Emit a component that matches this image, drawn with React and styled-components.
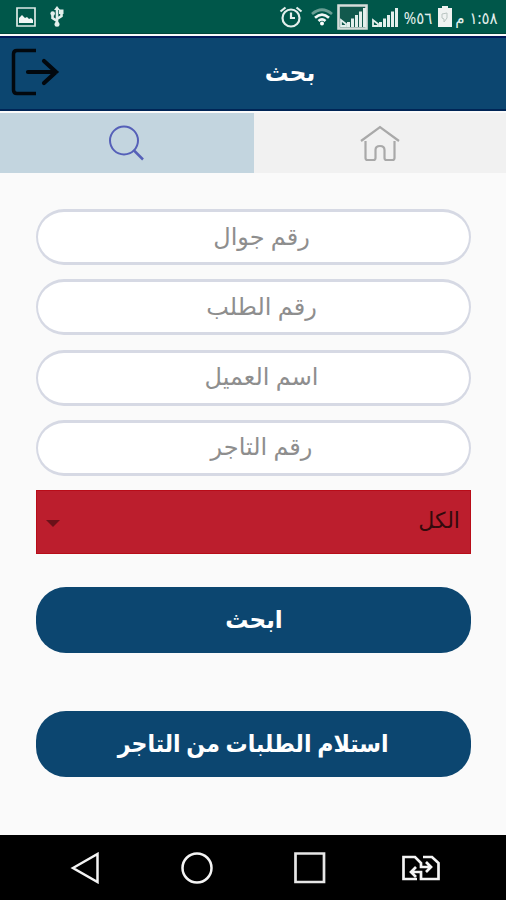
import React, { useState } from 'react';
import styled, { createGlobalStyle } from 'styled-components';

const GlobalStyle = createGlobalStyle`
  * {
    box-sizing: border-box;
  }
  body {
    margin: 0;
    font-family: "Noto Sans", "DejaVu Sans", sans-serif;
  }
`;

const Screen = styled.div`
  display: flex;
  flex-direction: column;
  width: 506px;
  height: 900px;
  overflow: hidden;
  background: #fafafa;
`;

const StatusBar = styled.div`
  display: flex;
  align-items: center;
  flex: none;
  height: 34px;
  padding: 0 8px 0 16px;
  color: #e3efec;
  background: #00574a;
  border-bottom: 1px solid #00453a;
`;

const StatusIcon = styled.svg`
  display: block;
  flex: none;
  margin-left: ${props => props.$gap || 0}px;
`;

const Spacer = styled.div`
  flex: 1;
`;

const StatusText = styled.span`
  width: ${props => props.$width}px;
  margin-left: ${props => props.$gap}px;
  font-size: 15px;
  line-height: 30px;
  text-align: center;
  white-space: nowrap;
  transform: scaleY(1.12);
`;

const Header = styled.header`
  display: flex;
  align-items: center;
  flex: none;
  height: 75px;
  margin-top: 2px;
  background: #0c4670;
  border-top: 2px solid #00195a;
  border-bottom: 2px solid #002556;
`;

const HeaderSide = styled.div`
  width: 240px;
  padding: 2px 0 0 10px;
`;

const Title = styled.h1`
  width: 100px;
  margin: 0;
  padding-bottom: 4px;
  color: #fff;
  font-size: 23.5px;
  font-weight: bold;
  line-height: 40px;
  text-align: center;
`;

const Tabs = styled.nav`
  display: flex;
  flex: none;
  height: 60px;
  margin-top: 2px;
`;

const Tab = styled.button`
  display: flex;
  flex: ${props => props.$active ? '0 0 254px' : '1'};
  align-items: center;
  justify-content: center;
  padding: 0;
  border: 0;
  color: ${props => props.$active ? '#5560b8' : '#a9a9a9'};
  background: ${props => props.$active ? '#c3d5df' : '#f1f1f1'};
`;

const Form = styled.form`
  display: flex;
  flex: 1;
  flex-direction: column;
  padding: 36px 35px 0 36px;
`;

const Input = styled.input`
  height: 56px;
  margin: 0 0 14.3px;
  padding: 0 0 4px 16px;
  border: solid #d6d9e4;
  border-width: 3px 2px;
  border-radius: 28px;
  color: #333;
  background: #fff;
  font-family: inherit;
  font-size: 24px;
  text-align: center;
  &::placeholder {
    color: #8e8e8e;
    opacity: 1;
  }
`;

const Select = styled.div`
  display: flex;
  align-items: center;
  justify-content: space-between;
  height: 64px;
  padding: 0 10px 6px;
  border: 1px solid #b80c18;
  color: #330a0c;
  background: #bc1e2d;
  font-size: 22px;
`;

const Arrow = styled.div`
  margin-top: 8px;
  margin-left: -1px;
  border: 7px solid transparent;
  border-top-color: #6b1119;
  border-bottom: 0;
`;

const Button = styled.button`
  height: 66px;
  margin: ${props => props.$top}px 0 0;
  padding: 0 0 4px;
  border: 0;
  border-radius: 30px;
  color: #fff;
  background: #0c4670;
  font-family: inherit;
  font-size: 24px;
  font-weight: bold;
`;

const ButtonLabel = styled.span`
  display: inline-block;
  transform: scaleX(${props => props.$stretch});
`;

const NavBar = styled.div`
  display: flex;
  align-items: center;
  flex: none;
  height: 65px;
  padding-left: 70px;
  gap: 80px;
  background: #000;
`;

const SimIcon = styled.svg`
  margin-left: -5px;
`;

function Signal({ boxed, gap }) {
  return (
    <StatusIcon $gap={gap} width={boxed ? 31 : 28} height="26" viewBox={boxed ? '0 0 31 26' : '2 0 28 26'} fill="#e3efec">
      {boxed && <path d="M1.500 1.500h28v23h-28z" fill="#12594d" stroke="#d5ddda" strokeWidth="2.600" />}
      <path d="M10 18h3v5h-3zM14 14.500h3V23h-3zM18 11h3v12h-3zM22 7.500h3V23h-3zM26 4h3v19h-3z" />
      <path d="M4 16v6h5v-2z" fill="none" stroke="#e3efec" strokeWidth="1.800" />
    </StatusIcon>
  );
}

const fields = ['رقم جوال', 'رقم الطلب', 'اسم العميل', 'رقم التاجر'];

function App() {
  const [tab, setTab] = useState('search');

  return (
    <Screen>
      <GlobalStyle />
      <StatusBar>
        <StatusIcon width="20" height="20" viewBox="0 0 20 20">
          <path d="M1 1h18v18H1z" fill="none" stroke="#dce9e6" strokeWidth="1.700" />
          <path d="M3 16V11l3-3 3 3 2-1 2 2 2-1 2 2v3z" fill="#f2f7f6" />
        </StatusIcon>
        <StatusIcon $gap={14} width="14" height="21" viewBox="0 0 14 21" fill="none" stroke="#e3efec" strokeWidth="2.600">
          <path d="M7 19V3M7 15l-4.500-3V8M7 13l4.500-3V6" />
          <path d="M7 0l3 4H4z" fill="#e3efec" stroke="none" />
          <circle cx="7" cy="18.300" r="2.500" fill="#e3efec" stroke="none" />
          <circle cx="2.700" cy="7.500" r="2.300" fill="#e3efec" stroke="none" />
          <path d="M9 3.500h4.500V8H9z" fill="#e3efec" stroke="none" />
        </StatusIcon>
        <Spacer />
        <StatusIcon width="24" height="22" viewBox="0 0 24 22" fill="none" stroke="#e3efec" strokeWidth="2.200">
          <circle cx="12" cy="12" r="8.500" />
          <path d="M12 6.500V12h4M1.500 5.500l5-4M22.500 5.500l-5-4" />
        </StatusIcon>
        <StatusIcon $gap={8} width="22" height="18" viewBox="0 0 22 18" fill="none" strokeWidth="2.700">
          <path d="M1 6Q11-2.500 21 6" stroke="#6a9e94" />
          <path d="M4 9.800Q11 3.500 18 9.800M7.500 13Q11 9.800 14.500 13" stroke="#f2f7f6" />
          <circle cx="11" cy="15.500" r="2" fill="#fff" />
        </StatusIcon>
        <Signal boxed gap={4} />
        <Signal gap={3} />
        <StatusText $width={30} $gap={4}>%٥٦</StatusText>
        <StatusIcon $gap={5} width="14" height="21" viewBox="0 0 14 21">
          <path d="M4 0h6v2h4v19H0V2h4z" fill="#f0f3f2" />
          <path d="M4 8l5-1v5l-3 4v-3l-2-1z" fill="none" stroke="#b9c4c1" />
        </StatusIcon>
        <StatusText $width={10} $gap={3}>م</StatusText>
        <StatusText $width={29} $gap={4}>١:٥٨</StatusText>
      </StatusBar>

      <Header>
        <HeaderSide>
          <svg width="50" height="48" viewBox="0 0 50 48" fill="none" stroke="#02080e" strokeWidth="3.500">
            <path d="M26 2.500H7Q3.500 2.500 3.500 6v36q0 3.500 3.500 3.500h19" />
            <path d="M18 24h28M34 13l12 11-12 11" strokeWidth="4.200" strokeLinecap="round" />
          </svg>
        </HeaderSide>
        <Title>بحث</Title>
      </Header>

      <Tabs>
        <Tab $active={tab === 'search'} onClick={() => setTab('search')}>
          <svg width="36" height="36" viewBox="0 0 36 36" fill="none" stroke="currentColor" strokeWidth="2">
            <circle cx="15" cy="15.500" r="14" />
            <path d="M24.500 25l9.500 9.500" strokeWidth="2.500" />
          </svg>
        </Tab>
        <Tab $active={tab === 'home'} onClick={() => setTab('home')}>
          <svg width="40" height="38" viewBox="0 0 40 38" fill="none" stroke="currentColor" strokeWidth="2.200">
            <path d="M1 17L20 3l19 14" />
            <path d="M5.500 17v17q0 2 2 2h6q2 0 2-2V26q0-4 4.500-4t4.500 4v8q0 2 2 2h6q2 0 2-2V17" />
          </svg>
        </Tab>
      </Tabs>

      <Form onSubmit={e => e.preventDefault()}>
        {fields.map(name => (
          <Input key={name} dir="rtl" placeholder={name} />
        ))}
        <Select>
          <Arrow />
          <span>الكل</span>
        </Select>
        <Button $top={33}>
          <ButtonLabel $stretch={0.96}>ابحث</ButtonLabel>
        </Button>
        <Button $top={58} dir="rtl">
          <ButtonLabel $stretch={0.92}>استلام الطلبات من التاجر</ButtonLabel>
        </Button>
      </Form>

      <NavBar>
        <svg width="30" height="32" viewBox="0 0 30 32" fill="none" stroke="#f4f4f4" strokeWidth="2.500">
          <path d="M3 16L27.500 2v28z" />
        </svg>
        <svg width="34" height="34" viewBox="0 0 34 34" fill="none" stroke="#f4f4f4" strokeWidth="2.500">
          <circle cx="17" cy="17" r="14.500" />
        </svg>
        <svg width="32" height="32" viewBox="0 0 32 32" fill="none" stroke="#e6e6e6" strokeWidth="2.700">
          <path d="M1.500 1.500h28.500v28.500H1.500z" />
        </svg>
        <SimIcon width="40" height="28" viewBox="0 0 40 28" fill="none" stroke="#f4f4f4" strokeWidth="2.700">
          <path d="M16 25H2.500V3H14l6 6v4h9M25 8l5 5-5 5" />
          <path d="M22 3h9l6.500 6v16H20v-7h-9M15 13l-5 5 5 5" />
        </SimIcon>
      </NavBar>
    </Screen>
  );
}

export default App;
